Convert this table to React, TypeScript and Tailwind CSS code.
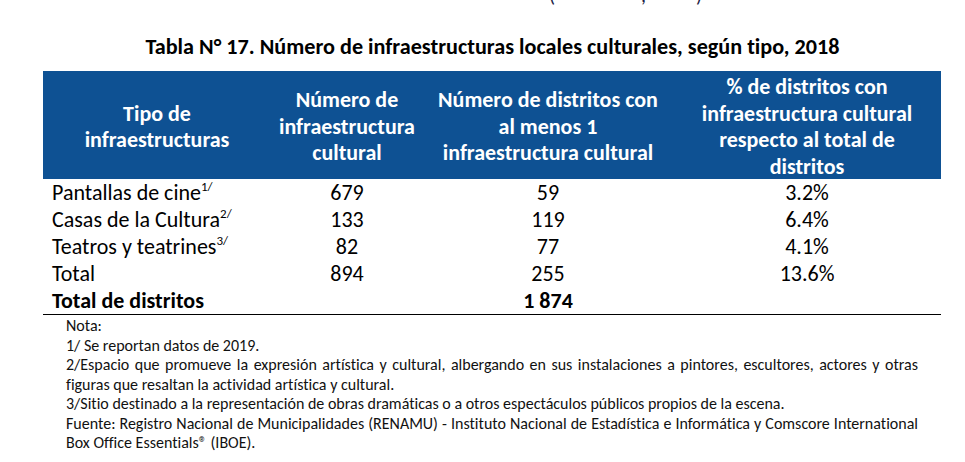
const rows = [
	{ label: "Pantallas de cine", note: "1/", count: "679", districts: "59", pct: "3.2%" },
	{ label: "Casas de la Cultura", note: "2/", count: "133", districts: "119", pct: "6.4%" },
	{ label: "Teatros y teatrines", note: "3/", count: "82", districts: "77", pct: "4.1%" },
	{ label: "Total", note: "", count: "894", districts: "255", pct: "13.6%" },
];

const font = "font-['Carlito','Calibri','Lato',sans-serif] [font-variant-ligatures:none]";

export default function App() {
	return (
		<div className={`w-[965px] h-[462px] overflow-hidden bg-white text-black ${font}`}>
			{/* bottom of the previous line, cut by the crop */}
			<div className="h-[6px] overflow-hidden">
				<div className="-mt-[15px] flex text-[20px] leading-[20px] text-[#1d1d45]">
					<span className="ml-[549px]">(</span>
					<span className="ml-[86px]">,</span>
					<span className="ml-[50px]">)</span>
				</div>
			</div>

			<h1 className="mt-[28px] text-center text-[22.2px] font-bold leading-[26px] pl-[20px]">
				Tabla N° 17. Número de infraestructuras locales culturales, según tipo, 2018
			</h1>

			<div className="ml-[43px] mt-[11px] w-[898px]">
				<div className="grid grid-cols-[228px_152px_250px_268px] bg-[#0e5193] h-[108px] pt-[3px] text-white font-bold text-[22px] leading-[26.5px] text-center">
					<div className="flex items-center justify-center">
						<span>
							Tipo de
							<br />
							infraestructuras
						</span>
					</div>
					<div className="flex items-center justify-center">
						<span>
							Número de
							<br />
							infraestructura
							<br />
							cultural
						</span>
					</div>
					<div className="flex items-center justify-center">
						<span>
							Número de distritos con
							<br />
							al menos 1
							<br />
							infraestructura cultural
						</span>
					</div>
					<div className="flex items-center justify-center">
						<span>
							% de distritos con
							<br />
							infraestructura cultural
							<br />
							respecto al total de
							<br />
							distritos
						</span>
					</div>
				</div>

				<div className="text-[22px] leading-[27px]">
					{rows.map((r) => (
						<div key={r.label} className="grid grid-cols-[228px_152px_250px_268px] h-[27px]">
							<div className="pl-[9px]">
								{r.label}
								{r.note && (
									<sup className="text-[13px] -top-[9px]">{r.note}</sup>
								)}
							</div>
							<div className="text-center">{r.count}</div>
							<div className="text-center">{r.districts}</div>
							<div className="text-center">{r.pct}</div>
						</div>
					))}
					<div className="grid grid-cols-[228px_152px_250px_268px] h-[28px] font-bold border-b-[1.5px] border-black">
						<div className="pl-[9px]">Total de distritos</div>
						<div></div>
						<div className="text-center">1 874</div>
						<div></div>
					</div>
				</div>

				<div className="px-[23px] pt-[1px] text-[16px] leading-[19.5px] text-[#111]">
					<p>Nota:</p>
					<p>1/ Se reportan datos de 2019.</p>
					<p className="text-justify">
						2/Espacio que promueve la expresión artística y cultural, albergando en sus instalaciones a pintores, escultores, actores y otras figuras que resaltan la actividad artística y cultural.
					</p>
					<p>3/Sitio destinado a la representación de obras dramáticas o a otros espectáculos públicos propios de la escena.</p>
					<p className="text-justify">
						Fuente: Registro Nacional de Municipalidades (RENAMU) - Instituto Nacional de Estadística e Informática y Comscore International Box Office Essentials® (IBOE).
					</p>
				</div>
			</div>
		</div>
	);
}
